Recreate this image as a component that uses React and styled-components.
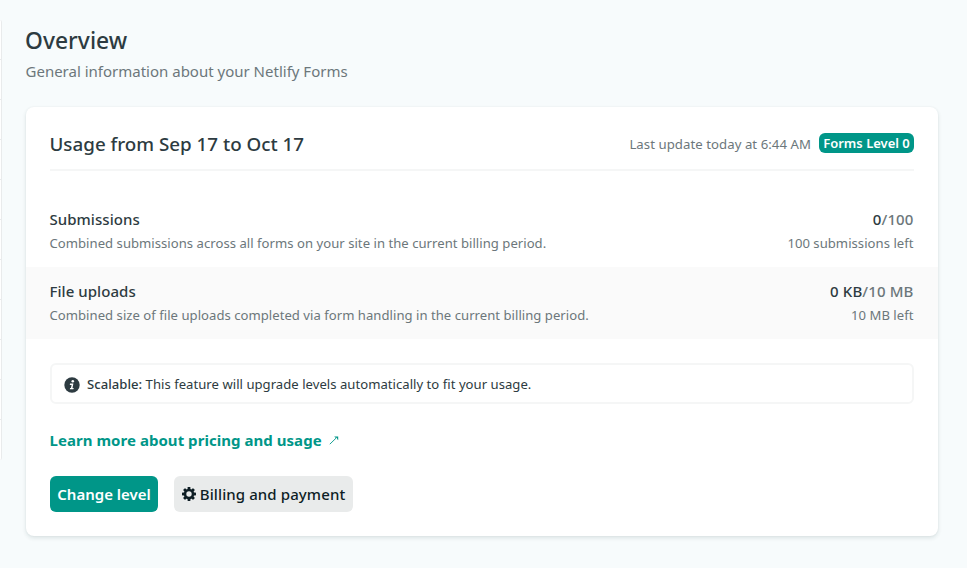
import React from "react";
import styled, { createGlobalStyle } from "styled-components";

const GlobalStyle = createGlobalStyle`
  *, *::before, *::after { box-sizing: border-box; }
  html, body { margin: 0; padding: 0; background: #f7fbfc; }
  body {
    font-family: "Segoe UI", "Noto Sans", "Open Sans", sans-serif;
    color: #2d3b41;
    overflow: hidden;
  }
  h1, h2, h3, p { margin: 0; }
`;

/* size, line height, weight and tracking of a single line of text */
const line = ($size, $height, $weight, $tracking = 0) => `
  font-size: ${$size}px;
  line-height: ${$height}px;
  font-weight: ${$weight};
  letter-spacing: ${$tracking}px;
  white-space: nowrap;
`;

const Page = styled.div`
  display: flex;
  align-items: flex-start;
  height: 568px;
`;

const SideNav = styled.nav`
  width: 2px;
  flex: none;
  margin-top: 20px;
  height: 440px;
  border-right: 1px solid #e9ebec;
  border-radius: 0 2px 2px 0;
  background: #fff;
`;

const SideNavItem = styled.div`
  height: 40px;
  border-bottom: 1px solid #e9ebec;
  &:last-child { border-bottom: 0; }
`;

const Content = styled.main`
  width: 912px;
  margin-left: 24px;
  padding-top: 24px;
`;

const Title = styled.h1`
  margin-left: -1px;
  color: #2d3b41;
  ${line(22.8, 34, 500, 0.05)}
`;

const Subtitle = styled.p`
  margin: 1px 0 0 -0.5px;
  color: #6c777b;
  ${line(15, 24, 400)}
`;

const Card = styled.section`
  margin-top: 24px;
  height: 429px;
  border-radius: 8px;
  background: #fff;
  box-shadow: 0 2px 4px rgba(14, 60, 60, 0.12), 0 0 2px rgba(14, 60, 60, 0.05);
`;

const CardHeader = styled.header`
  display: flex;
  align-items: center;
  justify-content: space-between;
  height: 64px;
  margin: 0 24px;
  padding-top: 10px;
  border-bottom: 2px solid #f5f6f6;
`;

const CardTitle = styled.h2`
  padding-top: 1px;
  margin-left: -0.5px;
  ${line(18.8, 28, 500)}
`;

const Status = styled.div`
  display: flex;
  align-items: center;
  gap: 8px;
`;

const Updated = styled.span`
  padding-top: 2px;
  color: #6c777b;
  ${line(13.2, 20, 400, 0.05)}
`;

const Badge = styled.span`
  width: 95px;
  height: 20px;
  border-radius: 6px;
  background: #009688;
  color: #fff;
  text-align: center;
  ${line(13, 20, 600)}
`;

const UsageList = styled.div`
  padding-top: 24px;
`;

const UsageRow = styled.div`
  display: flex;
  justify-content: space-between;
  height: 72px;
  padding: 12px 24.5px 12px 23.5px;
  background: ${(p) => (p.$shaded ? "#fafafa" : "#fff")};
`;

const UsageColumn = styled.div`
  text-align: ${(p) => (p.$end ? "right" : "left")};
`;

const UsageName = styled.h3`
  ${line(15, 24, 500, 0.05)}
`;

const UsageAmount = styled.p`
  color: #6c777b;
  ${line(15, 24, 500, 0.12)}
`;

const Used = styled.span`
  color: #2d3b41;
`;

const UsageNote = styled.p`
  color: #6c777b;
  ${line(13.1, 24, 400, 0.03)}
`;

const Notice = styled.div`
  display: flex;
  align-items: center;
  gap: 7px;
  height: 41px;
  margin: 24px 24px 0;
  padding: 2px 12px 0;
  border: 2px solid #f5f6f6;
  border-radius: 6px;
`;

const NoticeText = styled.p`
  margin-top: -2px;
  ${line(13.1, 20, 400, 0.03)}
`;

const Strong = styled.strong`
  font-weight: 500;
`;

const LearnMore = styled.a`
  display: flex;
  align-items: center;
  gap: 7px;
  margin: 24px 24px 0 23.5px;
  color: #009688;
  ${line(15, 24, 700, 0.04)}
`;

const Actions = styled.div`
  display: flex;
  gap: 16px;
  margin: 24px 24px 0;
`;

const Button = styled.button`
  display: flex;
  align-items: center;
  justify-content: center;
  gap: 4px;
  width: ${(p) => p.$width}px;
  height: 36px;
  padding: 0;
  border: 0;
  border-radius: 6px;
  font-family: inherit;
  background: ${(p) => (p.$primary ? "#009688" : "#e9ebeb")};
  color: ${(p) => (p.$primary ? "#fff" : "#0e1e25")};
  ${(p) => (p.$primary ? line(15, 24, 600) : line(15, 24, 500, 0.1))}
`;

const InfoIcon = () => (
  <svg width="16" height="16" viewBox="0 0 16 16" aria-hidden="true">
    <circle cx="8" cy="8" r="7.7" fill="#2d3b41" />
    <circle cx="8.8" cy="4.3" r="1.3" fill="#fff" />
    <path d="M6 6.6h3.4L8.5 11h1.2l-.3 1.3H5.8l.3-1.2h.8l.7-3.2H5.8z" fill="#fff" />
  </svg>
);

const GearIcon = () => (
  <svg width="14" height="14" viewBox="0 0 14 14" aria-hidden="true">
    <g fill="#0e1e25">
      {[0, 45, 90, 135].map((a) => (
        <rect key={a} x="5.6" y="0" width="2.8" height="14" rx="0.6" transform={`rotate(${a} 7 7)`} />
      ))}
      <circle cx="7" cy="7" r="5.2" />
    </g>
    <circle cx="7" cy="7" r="2.7" fill="#e9ebeb" />
  </svg>
);

const ArrowIcon = () => (
  <svg width="10" height="10" viewBox="0 0 10 10" aria-hidden="true">
    <path d="M0.8 9.2 7.6 2.6" fill="none" stroke="#009688" strokeWidth="0.9" />
    <path d="M5.2 1.6h4v3.6L8.1 4.1 8 2.8 6.5 2.7z" fill="#009688" />
  </svg>
);

const usage = [
  {
    name: "Submissions",
    note: "Combined submissions across all forms on your site in the current billing period.",
    used: "0",
    limit: "100",
    left: "100 submissions left",
  },
  {
    name: "File uploads",
    note: "Combined size of file uploads completed via form handling in the current billing period.",
    used: "0 KB",
    limit: "10 MB",
    left: "10 MB left",
  },
];

export default function App() {
  return (
    <Page>
      <GlobalStyle />
      <SideNav>
        {Array.from({ length: 11 }, (_, i) => (
          <SideNavItem key={i} />
        ))}
      </SideNav>
      <Content>
        <Title>Overview</Title>
        <Subtitle>General information about your Netlify Forms</Subtitle>
        <Card>
          <CardHeader>
            <CardTitle>Usage from Sep 17 to Oct 17</CardTitle>
            <Status>
              <Updated>Last update today at 6:44 AM</Updated>
              <Badge>Forms Level 0</Badge>
            </Status>
          </CardHeader>
          <UsageList>
            {usage.map((u, i) => (
              <UsageRow key={u.name} $shaded={i % 2 === 1}>
                <UsageColumn>
                  <UsageName>{u.name}</UsageName>
                  <UsageNote>{u.note}</UsageNote>
                </UsageColumn>
                <UsageColumn $end>
                  <UsageAmount>
                    <Used>{u.used}</Used>/{u.limit}
                  </UsageAmount>
                  <UsageNote>{u.left}</UsageNote>
                </UsageColumn>
              </UsageRow>
            ))}
          </UsageList>
          <Notice>
            <InfoIcon />
            <NoticeText>
              <Strong>Scalable:</Strong> This feature will upgrade levels automatically to fit your usage.
            </NoticeText>
          </Notice>
          <LearnMore>
            Learn more about pricing and usage
            <ArrowIcon />
          </LearnMore>
          <Actions>
            <Button $primary $width={108}>Change level</Button>
            <Button $width={179}>
              <GearIcon />
              Billing and payment
            </Button>
          </Actions>
        </Card>
      </Content>
    </Page>
  );
}
